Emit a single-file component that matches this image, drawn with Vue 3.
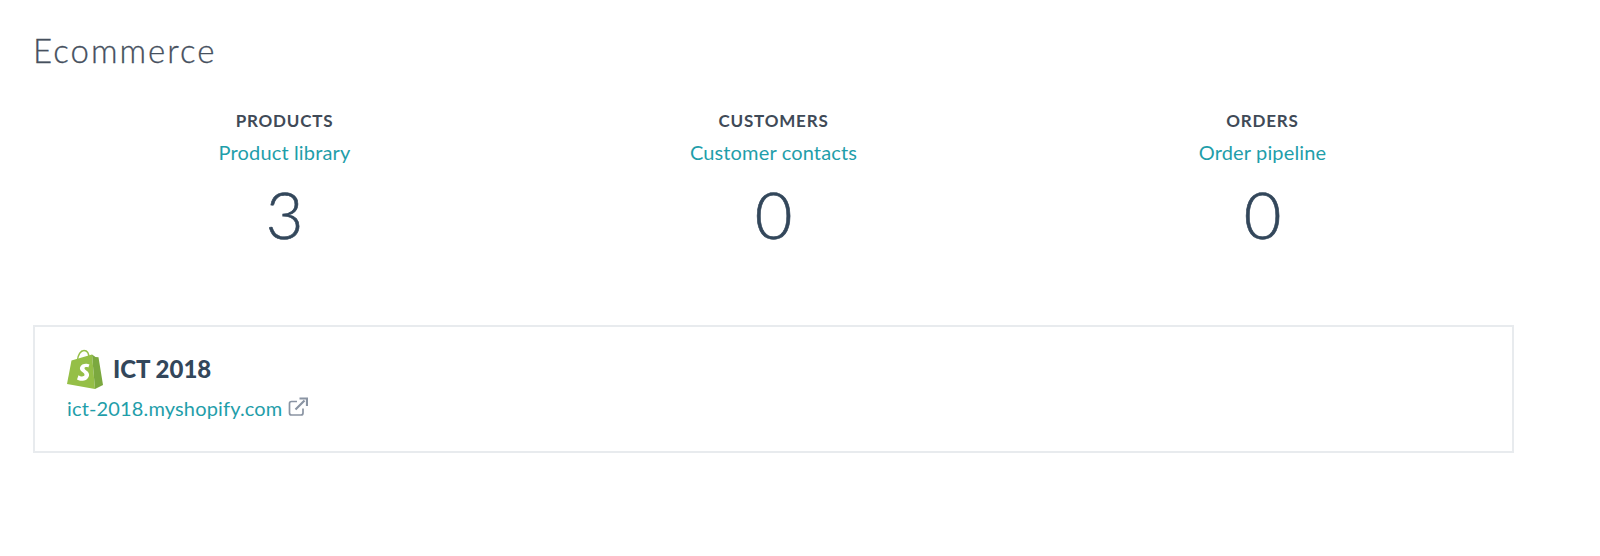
<template>
  <div class="page">
    <h1 class="title">Ecommerce</h1>

    <section class="stats">
      <div v-for="stat in stats" :key="stat.label" class="stat">
        <h2 class="stat-label">{{ stat.label }}</h2>
        <a class="link stat-link" href="#">{{ stat.link }}</a>
        <p class="stat-value">{{ stat.value }}</p>
      </div>
    </section>

    <section class="store-card">
      <div class="store-name">
        <svg class="shopify" viewBox="0 0 36 40" aria-hidden="true">
          <path d="M0 35 4.500 11.500 25 5.500 28 40z" fill="#95bf47" />
          <path d="M25 5.500 28.500 8l3 .3L36 36l-8 4z" fill="#7ba83f" />
          <path d="M10.500 11c.5-5 3-9.500 6.500-9.500 3.500 0 5 4 5 8" fill="none" stroke="#95bf47" stroke-width="1.500" />
          <path d="M22.500 15.500c-2-1-8-1.800-9.500 3-1 4 5 5 4.500 7.500-.4 2-4 1.800-6 .2l-1.500 4.300c3.500 2.300 10.500 2 12-3.800 1-4.500-5-5.500-4.500-7.700.3-1.300 2.700-1.200 3.800-.6z" fill="#fff" />
        </svg>
        <span>ICT 2018</span>
      </div>
      <a class="link store-link" href="#">
        ict-2018.myshopify.com
        <svg class="external" viewBox="0 0 20 20" aria-hidden="true">
          <path d="M9 4.500H3.500a2 2 0 0 0-2 2V16a2 2 0 0 0 2 2H13a2 2 0 0 0 2-2v-4.500" fill="none" stroke="#8a94a3" stroke-width="1.700" />
          <path d="M7.500 12.500 16.500 3.500M11.500 1.500H19V9" fill="none" stroke="#8a94a3" stroke-width="2.200" />
        </svg>
      </a>
    </section>
  </div>
</template>

<script setup>
const stats = [
  { label: 'PRODUCTS', link: 'Product library', value: 3 },
  { label: 'CUSTOMERS', link: 'Customer contacts', value: 0 },
  { label: 'ORDERS', link: 'Order pipeline', value: 0 },
]
</script>

<style>
html,
body {
  background: #fff;
}
</style>

<style scoped>
.page {
  width: 1600px;
  height: 556px;
  box-sizing: border-box;
  padding: 30px 86px 0 33px;
  font-family: Lato, 'Open Sans', sans-serif;
  color: #33475b;
  overflow: hidden;
}

.title {
  margin: 0;
  font-size: 33px;
  line-height: 40px;
  font-weight: 300;
  letter-spacing: 2px;
  color: #46505e;
  -webkit-text-stroke: 0.3px #46505e;
}

.stats {
  display: grid;
  grid-template-columns: repeat(3, 489px);
  margin: 40px 0 0 7px;
}

.stat {
  display: flex;
  flex-direction: column;
  align-items: center;
}

.stat-label {
  margin: 0;
  font-size: 17px;
  line-height: 22px;
  font-weight: 700;
  letter-spacing: 0.8px;
  color: #3f4a57;
}

.link {
  color: #1f9eaa;
  text-decoration: none;
  font-size: 20px;
  letter-spacing: 0.15px;
}

.stat-link {
  margin-top: 8px;
  line-height: 24px;
}

.stat-value {
  margin: 14px 0 0;
  font-size: 65px;
  line-height: 72px;
  font-weight: 300;
  -webkit-text-stroke: 0.6px #33475b;
}

.store-card {
  margin-top: 75px;
  height: 128px;
  box-sizing: border-box;
  border: 2px solid #e8ebee;
  padding: 22px 32px;
}

.store-name {
  display: flex;
  align-items: center;
  gap: 10px;
  font-size: 24px;
  line-height: 40px;
  font-weight: 900;
}

.shopify {
  width: 36px;
  height: 40px;
}

.store-link {
  display: flex;
  align-items: center;
  gap: 6px;
  margin-top: 7px;
  line-height: 24px;
}

.external {
  width: 20px;
  height: 20px;
  margin-top: -3px;
}
</style>
